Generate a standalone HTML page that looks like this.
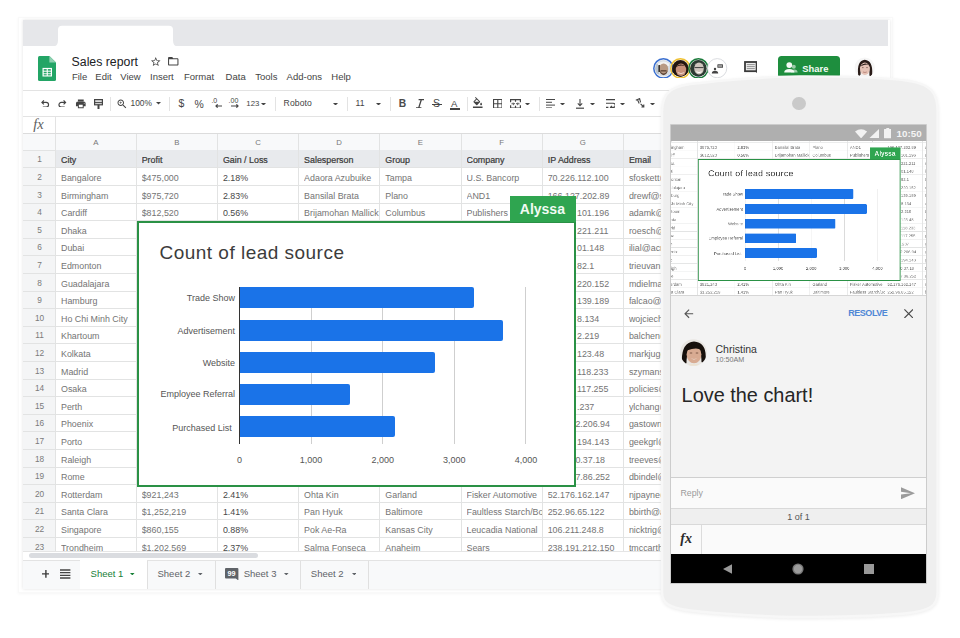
<!DOCTYPE html>
<html><head><meta charset="utf-8"><style>
*{box-sizing:border-box}
html,body{margin:0;padding:0}
body{width:960px;height:638px;overflow:hidden;background:#fff;position:relative;font-family:"Liberation Sans",sans-serif;color:#202124}
.abs{position:absolute}
.hl{position:absolute;left:0;width:1000px;height:1px;background:#e2e3e3}
.vl{position:absolute;top:133px;width:1px;height:440px;background:#e2e3e3}
.c,.hd{position:absolute;height:17.6px;line-height:17.6px;font-size:8.9px;white-space:nowrap;overflow:hidden;padding-top:2.2px;color:#747474}
.hd{font-weight:normal;color:#3a3a3a;font-size:8.9px;padding-top:1.4px;-webkit-text-stroke:0.22px #3a3a3a}
.dk{color:#484848}
.chart{position:absolute;left:136.9px;top:220.8px;width:439.1px;height:266.3px;background:#fff;border:2px solid #2a9145}
.ctitle{position:absolute;left:159.5px;top:242.2px;font-size:19px;letter-spacing:0.48px;color:#3c3c3c;white-space:nowrap;line-height:22px}
.bar{position:absolute;left:239.5px;height:21px;background:#1a73e8;border-radius:0 2px 2px 0}
.blab{position:absolute;left:135px;width:100px;text-align:right;font-size:9px;line-height:16px;color:#555;white-space:nowrap}
.alab{position:absolute;top:452px;width:60px;text-align:center;font-size:9px;line-height:16px;color:#555}
.tag{position:absolute;left:509.6px;top:196.3px;width:66.4px;height:25.4px;background:#2fa550;color:#f1fbf3;font-weight:bold;font-size:14px;line-height:25px;padding-left:10.2px;padding-top:1px}

.tb{position:absolute;top:98.2px;line-height:11px;color:#444;white-space:nowrap}
</style></head>
<body>
<div class="abs" style="left:17.5px;top:16.5px;width:875.5px;height:576px;border:1px solid rgba(0,0,0,0.025);box-shadow:0 1px 3px rgba(0,0,0,0.04)"></div>
<div class="abs" style="left:23px;top:19.5px;width:867px;height:569.5px;background:#fff;box-shadow:0 0 3px rgba(0,0,0,0.12)"></div>
<div class="abs" style="left:23px;top:19.5px;width:865.3px;height:26.4px;background:#e6e7ea"></div><svg class="abs" style="left:51.5px;top:24.5px;" width="127" height="22" viewBox="0 0 127 22"><path fill="#fff" d="M0 22 Q6 22 6 15.5 V4.8 Q6 0.8 10 0.8 H117 Q121 0.8 121 4.8 V15.5 Q121 22 127 22 Z"/></svg><svg class="abs" style="left:38px;top:55.8px;" width="18" height="25" viewBox="0 0 18 25"><path fill="#23a566" d="M1.5 0H11.4L18 6.4V23.5Q18 25 16.5 25H1.5Q0 25 0 23.5V1.5Q0 0 1.5 0Z"/><path fill="#8ed1b1" d="M11.4 0L18 6.4H11.4Z"/><rect x="4.5" y="11.9" width="9.5" height="8.6" fill="#fff"/><rect x="5.7" y="13.1" width="3" height="1.6" fill="#23a566"/><rect x="9.8" y="13.1" width="3" height="1.6" fill="#23a566"/><rect x="5.7" y="15.7" width="3" height="1.6" fill="#23a566"/><rect x="9.8" y="15.7" width="3" height="1.6" fill="#23a566"/><rect x="5.7" y="18.2" width="3" height="1.2" fill="#23a566"/><rect x="9.8" y="18.2" width="3" height="1.2" fill="#23a566"/></svg><div class="abs" style="left:71.6px;top:54.1px;font-size:12.3px;line-height:16px;color:#202124;white-space:nowrap">Sales report</div><svg class="abs" style="left:150.25px;top:55.55px;" width="11.5" height="11.5" viewBox="0 0 24 24"><path fill="#444" d="M22 9.24l-7.19-.62L12 2 9.19 8.63 2 9.24l5.46 4.73L5.82 21 12 17.27 18.18 21l-1.63-7.03L22 9.24zM12 15.4l-3.76 2.27 1-4.28-3.32-2.88 4.38-.38L12 6.1l1.71 4.04 4.38.38-3.32 2.88 1 4.28L12 15.4z"/></svg><svg class="abs" style="left:167.05px;top:55.25px;" width="12.5" height="12.5" viewBox="0 0 24 24"><path fill="#444" d="M20 6h-8l-2-2H4c-1.1 0-1.99.9-1.99 2L2 18c0 1.1.9 2 2 2h16c1.1 0 2-.9 2-2V8c0-1.1-.9-2-2-2zm0 12H4V8h16v10z"/></svg><div class="abs" style="left:71.9px;top:71.4px;font-size:9.5px;line-height:12px;color:#444;white-space:nowrap">File</div><div class="abs" style="left:95.3px;top:71.4px;font-size:9.5px;line-height:12px;color:#444;white-space:nowrap">Edit</div><div class="abs" style="left:120.3px;top:71.4px;font-size:9.5px;line-height:12px;color:#444;white-space:nowrap">View</div><div class="abs" style="left:150px;top:71.4px;font-size:9.5px;line-height:12px;color:#444;white-space:nowrap">Insert</div><div class="abs" style="left:184px;top:71.4px;font-size:9.5px;line-height:12px;color:#444;white-space:nowrap">Format</div><div class="abs" style="left:225.6px;top:71.4px;font-size:9.5px;line-height:12px;color:#444;white-space:nowrap">Data</div><div class="abs" style="left:255.3px;top:71.4px;font-size:9.5px;line-height:12px;color:#444;white-space:nowrap">Tools</div><div class="abs" style="left:286.6px;top:71.4px;font-size:9.5px;line-height:12px;color:#444;white-space:nowrap">Add-ons</div><div class="abs" style="left:331.3px;top:71.4px;font-size:9.5px;line-height:12px;color:#444;white-space:nowrap">Help</div><div class="abs" style="left:23px;top:90px;width:867px;height:1px;background:#e3e3e3"></div><div class="abs" style="left:23px;top:115.8px;width:867px;height:1px;background:#e3e3e3"></div><div class="abs" style="left:23px;top:133px;width:867px;height:1px;background:#e3e3e3"></div><svg class="abs" style="left:41.4px;top:99.6px;" width="8.5" height="7.6" viewBox="0 0 8.5 7.6"><path fill="none" stroke="#444" stroke-width="1.15" d="M0.9 2.4H5.2A2.35 2.35 0 0 1 5.2 7.1H1.8M2.9 0.4L0.9 2.4 2.9 4.4"/></svg><svg class="abs" style="left:58.3px;top:99.6px;" width="8.5" height="7.6" viewBox="0 0 8.5 7.6"><path fill="none" stroke="#444" stroke-width="1.15" d="M7.6 2.4H3.3A2.35 2.35 0 0 0 3.3 7.1H6.7M5.6 0.4L7.6 2.4 5.6 4.4"/></svg><svg class="abs" style="left:74.9px;top:97.5px;" width="11.6" height="11.6" viewBox="0 0 24 24"><path fill="#444" d="M19 8H5c-1.66 0-3 1.34-3 3v6h4v4h12v-4h4v-6c0-1.66-1.34-3-3-3zm-3 11H8v-5h8v5zm3-7c-.55 0-1-.45-1-1s.45-1 1-1 1 .45 1 1-.45 1-1 1zm-1-9H6v4h12V3z"/></svg><svg class="abs" style="left:93.6px;top:99px;" width="9" height="10" viewBox="0 0 9 10"><rect x="0.6" y="0.6" width="7.8" height="5.2" fill="#ddd" stroke="#444" stroke-width="1.2"/><path d="M0.6 3.6H8.4" stroke="#444" stroke-width="1"/><rect x="3.5" y="5.6" width="2" height="4.4" fill="#444"/></svg><div class="abs" style="left:110px;top:96.5px;width:1px;height:14px;background:#e3e3e3"></div><div class="abs" style="left:169.3px;top:96.5px;width:1px;height:14px;background:#e3e3e3"></div><div class="abs" style="left:275.3px;top:96.5px;width:1px;height:14px;background:#e3e3e3"></div><div class="abs" style="left:347.3px;top:96.5px;width:1px;height:14px;background:#e3e3e3"></div><div class="abs" style="left:389.8px;top:96.5px;width:1px;height:14px;background:#e3e3e3"></div><div class="abs" style="left:466.8px;top:96.5px;width:1px;height:14px;background:#e3e3e3"></div><div class="abs" style="left:539.2px;top:96.5px;width:1px;height:14px;background:#e3e3e3"></div><svg class="abs" style="left:116px;top:97.5px;" width="12" height="12" viewBox="0 0 24 24"><path fill="#444" d="M15.5 14h-.79l-.28-.27C15.41 12.590 16 11.11 16 9.5 16 5.91 13.09 3 9.5 3S3 5.91 3 9.5 5.91 16 9.5 16c1.61 0 3.09-.59 4.23-1.57l.27.28v.79l5 4.99L20.49 19l-4.99-5zm-6 0C7.01 14 5 11.99 5 9.5S7.01 5 9.5 5 14 7.01 14 9.5 11.99 14 9.5 14zm2.5-4h-2v2H9v-2H7V9h2V7h1v2h2v1z"/></svg><div class="abs tb" style="left:130.5px;font-size:8.4px;top:98.4px">100%</div><svg class="abs" style="left:155.7px;top:102.3px;" width="5" height="2.6" viewBox="0 0 5 2.6"><path fill="#444" d="M0 0H5L2.5 2.6Z"/></svg><div class="abs tb" style="left:178.5px;font-size:10.5px;top:97.6px">$</div><div class="abs tb" style="left:194.6px;font-size:10.4px;top:98.6px">%</div><div class="abs tb" style="left:211.4px;font-size:7px;top:95.4px">.0</div><svg class="abs" style="left:214.5px;top:104.2px;" width="7.5" height="4" viewBox="0 0 7.5 4"><path fill="none" stroke="#444" stroke-width="1.2" d="M7.5 2H1M2.6 0.4L1 2 2.6 3.6"/></svg><div class="abs tb" style="left:228.6px;font-size:7px;top:95.4px">.00</div><svg class="abs" style="left:231px;top:104.2px;" width="8" height="4" viewBox="0 0 8 4"><path fill="none" stroke="#444" stroke-width="1.2" d="M0 2H7M5.4 0.4L7 2 5.4 3.6"/></svg><div class="abs tb" style="left:246.3px;font-size:7.8px;top:98px">123</div><svg class="abs" style="left:261.2px;top:102.5px;" width="5" height="2.6" viewBox="0 0 5 2.6"><path fill="#444" d="M0 0H5L2.5 2.6Z"/></svg><div class="abs tb" style="left:283.6px;font-size:8.6px;letter-spacing:0.1px;top:98.3px">Roboto</div><svg class="abs" style="left:332.9px;top:102.5px;" width="5" height="2.6" viewBox="0 0 5 2.6"><path fill="#444" d="M0 0H5L2.5 2.6Z"/></svg><div class="abs tb" style="left:355.6px;font-size:8.6px;top:98.3px">11</div><svg class="abs" style="left:375.6px;top:102.5px;" width="5" height="2.6" viewBox="0 0 5 2.6"><path fill="#444" d="M0 0H5L2.5 2.6Z"/></svg><div class="abs tb" style="left:398.8px;font-size:10.3px;font-weight:bold;top:98.2px;color:#4a4a4a">B</div><svg class="abs" style="left:415.5px;top:98.6px;" width="8" height="9.6" viewBox="0 0 8 9.6"><path fill="none" stroke="#444" stroke-width="1.3" d="M2.6 0.7H8M0 8.9H5.4M5.3 0.7L2.7 8.9"/></svg><div class="abs tb" style="left:433px;font-size:10.6px;top:98px">S</div><div class="abs" style="left:431.5px;top:103.6px;width:10.5px;height:1px;background:#444"></div><div class="abs tb" style="left:451px;font-size:9.6px;top:97.6px">A</div><div class="abs" style="left:449.6px;top:108.3px;width:10.6px;height:1.4px;background:#444"></div><svg class="abs" style="left:472.25px;top:97.45px;" width="11.5" height="11.5" viewBox="0 0 24 24"><path fill="#444" d="M16.56 8.94L7.62 0 6.21 1.41l2.38 2.38-5.15 5.15c-.59.59-.59 1.54 0 2.12l5.5 5.5c.29.29.68.44 1.06.44s.77-.15 1.06-.44l5.5-5.5c.59-.58.59-1.53 0-2.12zM5.21 10L10 5.21 14.79 10H5.21zM19 11.5s-2 2.170-2 3.5c0 1.1.9 2 2 2s2-.9 2-2c0-1.33-2-3.5-2-3.5z M2 20h20v3H2z"/></svg><svg class="abs" style="left:492.6px;top:98.8px;" width="9.6" height="9.6" viewBox="0 0 9.6 9.6"><path fill="none" stroke="#444" stroke-width="1.1" d="M0.55 0.55H9.05V9.05H0.55ZM4.8 0.55V9.05M0.55 4.8H9.05"/></svg><svg class="abs" style="left:510px;top:98.6px;" width="11" height="9.6" viewBox="0 0 11 9.6"><path fill="none" stroke="#444" stroke-width="1.2" d="M0.6 3.3V0.6H10.4V3.3M0.6 6.3V9H10.4V6.3M5.5 0.6V2.8M5.5 6.8V9"/><path fill="none" stroke="#444" stroke-width="1" d="M1.5 4.8H4.3M3.2 3.6L4.4 4.8 3.2 6M9.5 4.8H6.7M7.8 3.6L6.6 4.8 7.8 6"/></svg><svg class="abs" style="left:525px;top:102.5px;" width="5" height="2.6" viewBox="0 0 5 2.6"><path fill="#444" d="M0 0H5L2.5 2.6Z"/></svg><svg class="abs" style="left:546px;top:98.8px;" width="9.4" height="9.4" viewBox="0 0 9.4 9.4"><path stroke="#444" stroke-width="1" d="M0 0.5H9.4M0 3.3H6M0 6.1H9.4M0 8.9H6"/></svg><svg class="abs" style="left:560px;top:102.5px;" width="5" height="2.6" viewBox="0 0 5 2.6"><path fill="#444" d="M0 0H5L2.5 2.6Z"/></svg><svg class="abs" style="left:576.4px;top:98.6px;" width="8" height="10" viewBox="0 0 8 10"><path fill="none" stroke="#444" stroke-width="1.1" d="M4 0V6.5M1.8 4.4L4 6.8 6.2 4.4"/><path stroke="#444" stroke-width="1.2" d="M0 9.2H8"/></svg><svg class="abs" style="left:590.1px;top:102.5px;" width="5" height="2.6" viewBox="0 0 5 2.6"><path fill="#444" d="M0 0H5L2.5 2.6Z"/></svg><svg class="abs" style="left:605.6px;top:99px;" width="9.4" height="9.4" viewBox="0 0 9.4 9.4"><path fill="none" stroke="#444" stroke-width="1.1" d="M0 0.6H9.4M0 4.2H7.2A2.1 2.1 0 0 1 7.2 8.4H4.6M5.8 6.8L4.4 8.4 5.8 9.9M0 8.4H2.4"/></svg><svg class="abs" style="left:619.8px;top:102.5px;" width="5" height="2.6" viewBox="0 0 5 2.6"><path fill="#444" d="M0 0H5L2.5 2.6Z"/></svg><svg class="abs" style="left:635.2px;top:98.4px;" width="10" height="10" viewBox="0 0 10 10"><path fill="none" stroke="#444" stroke-width="1.1" d="M0.8 2.2L4.6 0.6 5.6 4.4M2.4 1.6L4.2 5.6M5.6 5.8L8.8 9M8.8 6.6V9H6.4"/></svg><svg class="abs" style="left:649.8px;top:102.5px;" width="5" height="2.6" viewBox="0 0 5 2.6"><path fill="#444" d="M0 0H5L2.5 2.6Z"/></svg><div class="abs" style="left:33.2px;top:116.4px;font-family:'Liberation Serif',serif;font-style:italic;font-size:14.5px;line-height:16px;color:#606060">fx</div><div class="abs" style="left:55px;top:116px;width:1px;height:17px;background:#e3e3e3"></div><svg class="abs" style="left:652.8px;top:57.6px;" width="20.8" height="20.8" viewBox="0 0 20.8 20.8"><defs><clipPath id="a1"><circle cx="10.4" cy="10.4" r="8.3"/></clipPath></defs><g clip-path="url(#a1)"><rect width="20.8" height="20.8" fill="#d9dee3"/><rect x="0" y="6" width="6" height="10" fill="#b9c3cc"/><path d="M5 5.5Q10.4 1.5 16 5.5V8H5Z" fill="#f2f2f2"/><ellipse cx="10.6" cy="11" rx="4.6" ry="5.6" fill="#b89a84"/><path d="M6.6 12.6Q10.6 18.6 14.6 12.6Q14 16.6 10.6 17.2Q7.2 16.6 6.6 12.6Z" fill="#5e4638"/><rect x="7.6" y="12.2" width="6" height="1.3" fill="#5a4030"/><path d="M3 21Q10.4 14.5 18 21Z" fill="#eef0f2"/><rect x="5.4" y="7" width="1.6" height="7" fill="#3a3430"/></g><circle cx="10.4" cy="10.4" r="9.6" fill="none" stroke="#3a6fd0" stroke-width="1.5"/></svg><svg class="abs" style="left:670.4px;top:57.6px;" width="20.8" height="20.8" viewBox="0 0 20.8 20.8"><defs><clipPath id="a2"><circle cx="10.4" cy="10.4" r="8.3"/></clipPath></defs><g clip-path="url(#a2)"><rect width="20.8" height="20.8" fill="#3b2a22"/><path d="M2 20Q1 3 10.4 2.6Q19.8 3 19 20Z" fill="#22160f"/><ellipse cx="11" cy="11.8" rx="5.2" ry="6.2" fill="#c8917a"/><path d="M7.8 14.6Q11 16.6 14.2 14.6" stroke="#f0e0d8" stroke-width="0.9" fill="none"/><path d="M5.6 9Q10 4 16 8.6Q12 6.4 5.6 9Z" fill="#22160f"/></g><circle cx="10.4" cy="10.4" r="9.6" fill="none" stroke="#f0c233" stroke-width="1.5"/></svg><svg class="abs" style="left:688.2px;top:57.6px;" width="20.8" height="20.8" viewBox="0 0 20.8 20.8"><defs><clipPath id="a3"><circle cx="10.4" cy="10.4" r="8.3"/></clipPath></defs><g clip-path="url(#a3)"><rect width="20.8" height="20.8" fill="#2c3a32"/><ellipse cx="11" cy="10.6" rx="4.8" ry="6" fill="#cfc6be"/><path d="M6 7.2Q11 1.8 16 7.2Q14.6 4.6 11 4.4Q7.4 4.6 6 7.2Z" fill="#9d9894"/><path d="M6.6 9.6H15.4" stroke="#3a3a3a" stroke-width="1"/><path d="M8.4 13.8Q11 15.4 13.6 13.8" stroke="#fff" stroke-width="1" fill="none"/><path d="M2 21Q10.4 15 19 21Z" fill="#58708a"/></g><circle cx="10.4" cy="10.4" r="9.6" fill="none" stroke="#1b7a3b" stroke-width="1.5"/></svg><svg class="abs" style="left:707.3px;top:57.8px;" width="20.4" height="20.4" viewBox="0 0 20.4 20.4"><circle cx="10.2" cy="10.2" r="9.6" fill="#fff" stroke="#dadce0" stroke-width="1"/><circle cx="8" cy="11" r="1.2" fill="#444"/><path d="M4.8 15.6Q4.8 12.8 8 12.8Q11.2 12.8 11.2 15.6Z" fill="#444"/><rect x="10.4" y="6.2" width="5.6" height="3.6" rx="0.6" fill="#444"/><path d="M11.2 7.4H15.2M11.2 8.6H15.2" stroke="#fff" stroke-width="0.5"/></svg><svg class="abs" style="left:743.8px;top:61.3px;" width="13.6" height="12.6" viewBox="0 0 13.6 12.6"><rect x="1" y="1" width="11.6" height="9.2" fill="#ececec" stroke="#3a3a3a" stroke-width="1.8"/><path d="M2.8 3.6H10.8M2.8 5.6H10.8M2.8 7.6H10.8" stroke="#7a7a7a" stroke-width="0.8"/><path d="M11.2 10.6H13.6V12.6Z" fill="#3a3a3a"/></svg><div class="abs" style="left:778px;top:56.3px;width:62px;height:22px;background:#1e8e3e;border-radius:3.5px"></div><svg class="abs" style="left:783px;top:60.5px;" width="16" height="13" viewBox="0 0 16 13"><circle cx="10.8" cy="5.8" r="2" fill="rgba(255,255,255,0.55)"/><path d="M8 11.6Q8 8.4 11.3 8.4Q14.6 8.4 14.6 11.6Z" fill="rgba(255,255,255,0.55)"/><circle cx="6.3" cy="4.1" r="2.9" fill="#f4fbf5"/><path d="M1.2 11.6Q1.2 8 6.3 8Q11.4 8 11.4 11.6Z" fill="#f4fbf5"/></svg><div class="abs" style="left:802.3px;top:63.3px;font-size:9.4px;font-weight:bold;line-height:12px;color:#f4fbf6">Share</div><svg class="abs" style="left:853.8px;top:57.2px;" width="21.4" height="21.4" viewBox="0 0 21.4 21.4"><defs><clipPath id="pf"><circle cx="10.7" cy="10.7" r="10.2"/></clipPath></defs><g clip-path="url(#pf)"><rect width="21.4" height="21.4" fill="#f6f6f6"/><path d="M4.2 18Q2.6 3.6 10.8 2.8Q19 3.6 18.2 17Q17.4 20.4 15.4 18.4V10Q10.8 6.6 6.6 10V17.6Q5.6 19.6 4.2 18Z" fill="#2a1c18"/><ellipse cx="10.9" cy="11.8" rx="4.9" ry="6.2" fill="#e6c3b6"/><path d="M6.2 9.4Q10.4 4.4 15.6 8.2Q12.4 6.6 6.2 9.4Z" fill="#2a1c18"/><path d="M9 15Q11 16 12.8 15" stroke="#b07a70" stroke-width="0.8" fill="none"/><path d="M8 10.6H9.6M12.2 10.6H13.8" stroke="#6a4a40" stroke-width="0.7"/></g></svg>
<div class="abs" style="left:23px;top:133.3px;width:867px;height:418.1px;overflow:hidden">
  <div class="abs" style="left:-23px;top:-133.3px;width:960px;height:640px">
  <div class="abs" style="left:23px;top:133.3px;width:867px;height:17px;background:#f8f9fa"></div><div class="abs" style="left:23px;top:150.3px;width:32.5px;height:404.8px;background:#f4f5f6"></div><div class="abs" style="left:75.85px;top:136.3px;width:40px;text-align:center;font-size:7.8px;line-height:13px;color:#777">A</div><div class="abs" style="left:156.8px;top:136.3px;width:40px;text-align:center;font-size:7.8px;line-height:13px;color:#777">B</div><div class="abs" style="left:238px;top:136.3px;width:40px;text-align:center;font-size:7.8px;line-height:13px;color:#777">C</div><div class="abs" style="left:319.2px;top:136.3px;width:40px;text-align:center;font-size:7.8px;line-height:13px;color:#777">D</div><div class="abs" style="left:400.4px;top:136.3px;width:40px;text-align:center;font-size:7.8px;line-height:13px;color:#777">E</div><div class="abs" style="left:481.6px;top:136.3px;width:40px;text-align:center;font-size:7.8px;line-height:13px;color:#777">F</div><div class="abs" style="left:562.8px;top:136.3px;width:40px;text-align:center;font-size:7.8px;line-height:13px;color:#777">G</div><div class="abs" style="left:644px;top:136.3px;width:40px;text-align:center;font-size:7.8px;line-height:13px;color:#777">H</div><div class="abs" style="left:725.2px;top:136.3px;width:40px;text-align:center;font-size:7.8px;line-height:13px;color:#777">I</div><div class="abs" style="left:806.4px;top:136.3px;width:40px;text-align:center;font-size:7.8px;line-height:13px;color:#777">J</div><div class="abs" style="left:887.6px;top:136.3px;width:40px;text-align:center;font-size:7.8px;line-height:13px;color:#777">K</div><div class="abs" style="left:23.5px;top:150.3px;width:32px;text-align:center;font-size:8.3px;line-height:17.6px;padding-top:1.2px;color:#7a7a7a">1</div><div class="abs" style="left:23.5px;top:167.9px;width:32px;text-align:center;font-size:8.3px;line-height:17.6px;padding-top:1.2px;color:#7a7a7a">2</div><div class="abs" style="left:23.5px;top:185.5px;width:32px;text-align:center;font-size:8.3px;line-height:17.6px;padding-top:1.2px;color:#7a7a7a">3</div><div class="abs" style="left:23.5px;top:203.1px;width:32px;text-align:center;font-size:8.3px;line-height:17.6px;padding-top:1.2px;color:#7a7a7a">4</div><div class="abs" style="left:23.5px;top:220.7px;width:32px;text-align:center;font-size:8.3px;line-height:17.6px;padding-top:1.2px;color:#7a7a7a">5</div><div class="abs" style="left:23.5px;top:238.3px;width:32px;text-align:center;font-size:8.3px;line-height:17.6px;padding-top:1.2px;color:#7a7a7a">6</div><div class="abs" style="left:23.5px;top:255.9px;width:32px;text-align:center;font-size:8.3px;line-height:17.6px;padding-top:1.2px;color:#7a7a7a">7</div><div class="abs" style="left:23.5px;top:273.5px;width:32px;text-align:center;font-size:8.3px;line-height:17.6px;padding-top:1.2px;color:#7a7a7a">8</div><div class="abs" style="left:23.5px;top:291.1px;width:32px;text-align:center;font-size:8.3px;line-height:17.6px;padding-top:1.2px;color:#7a7a7a">9</div><div class="abs" style="left:23.5px;top:308.7px;width:32px;text-align:center;font-size:8.3px;line-height:17.6px;padding-top:1.2px;color:#7a7a7a">10</div><div class="abs" style="left:23.5px;top:326.3px;width:32px;text-align:center;font-size:8.3px;line-height:17.6px;padding-top:1.2px;color:#7a7a7a">11</div><div class="abs" style="left:23.5px;top:343.9px;width:32px;text-align:center;font-size:8.3px;line-height:17.6px;padding-top:1.2px;color:#7a7a7a">12</div><div class="abs" style="left:23.5px;top:361.5px;width:32px;text-align:center;font-size:8.3px;line-height:17.6px;padding-top:1.2px;color:#7a7a7a">13</div><div class="abs" style="left:23.5px;top:379.1px;width:32px;text-align:center;font-size:8.3px;line-height:17.6px;padding-top:1.2px;color:#7a7a7a">14</div><div class="abs" style="left:23.5px;top:396.7px;width:32px;text-align:center;font-size:8.3px;line-height:17.6px;padding-top:1.2px;color:#7a7a7a">15</div><div class="abs" style="left:23.5px;top:414.3px;width:32px;text-align:center;font-size:8.3px;line-height:17.6px;padding-top:1.2px;color:#7a7a7a">16</div><div class="abs" style="left:23.5px;top:431.9px;width:32px;text-align:center;font-size:8.3px;line-height:17.6px;padding-top:1.2px;color:#7a7a7a">17</div><div class="abs" style="left:23.5px;top:449.5px;width:32px;text-align:center;font-size:8.3px;line-height:17.6px;padding-top:1.2px;color:#7a7a7a">18</div><div class="abs" style="left:23.5px;top:467.1px;width:32px;text-align:center;font-size:8.3px;line-height:17.6px;padding-top:1.2px;color:#7a7a7a">19</div><div class="abs" style="left:23.5px;top:484.7px;width:32px;text-align:center;font-size:8.3px;line-height:17.6px;padding-top:1.2px;color:#7a7a7a">20</div><div class="abs" style="left:23.5px;top:502.3px;width:32px;text-align:center;font-size:8.3px;line-height:17.6px;padding-top:1.2px;color:#7a7a7a">21</div><div class="abs" style="left:23.5px;top:519.9px;width:32px;text-align:center;font-size:8.3px;line-height:17.6px;padding-top:1.2px;color:#7a7a7a">22</div><div class="abs" style="left:23.5px;top:537.5px;width:32px;text-align:center;font-size:8.3px;line-height:17.6px;padding-top:1.2px;color:#7a7a7a">23</div><div class="abs" style="left:23.5px;top:555.1px;width:32px;text-align:center;font-size:8.3px;line-height:17.6px;padding-top:1.2px;color:#7a7a7a">24</div><div class="abs" style="left:23px;top:149.8px;width:867px;height:1px;background:#e2e3e3"></div>
  <div style="position:absolute;left:55.5px;top:150.3px;width:1092.7px;height:17.6px;background:#e8eaed"></div>
<div class="hl" style="top:167.4px"></div>
<div class="hl" style="top:185px"></div>
<div class="hl" style="top:202.6px"></div>
<div class="hl" style="top:220.2px"></div>
<div class="hl" style="top:237.8px"></div>
<div class="hl" style="top:255.4px"></div>
<div class="hl" style="top:273px"></div>
<div class="hl" style="top:290.6px"></div>
<div class="hl" style="top:308.2px"></div>
<div class="hl" style="top:325.8px"></div>
<div class="hl" style="top:343.4px"></div>
<div class="hl" style="top:361px"></div>
<div class="hl" style="top:378.6px"></div>
<div class="hl" style="top:396.2px"></div>
<div class="hl" style="top:413.8px"></div>
<div class="hl" style="top:431.4px"></div>
<div class="hl" style="top:449px"></div>
<div class="hl" style="top:466.6px"></div>
<div class="hl" style="top:484.2px"></div>
<div class="hl" style="top:501.8px"></div>
<div class="hl" style="top:519.4px"></div>
<div class="hl" style="top:537px"></div>
<div class="hl" style="top:554.6px"></div>
<div class="hl" style="top:572.2px"></div>
<div class="vl" style="left:55px"></div>
<div class="vl" style="left:135.7px"></div>
<div class="vl" style="left:216.9px"></div>
<div class="vl" style="left:298.1px"></div>
<div class="vl" style="left:379.3px"></div>
<div class="vl" style="left:460.5px"></div>
<div class="vl" style="left:541.7px"></div>
<div class="vl" style="left:622.9px"></div>
<div class="vl" style="left:704.1px"></div>
<div class="vl" style="left:785.3px"></div>
<div class="vl" style="left:866.5px"></div>
<div class="vl" style="left:947.7px"></div>
<div class="hd" style="left:61px;top:150.3px;width:74.7px">City</div>
<div class="hd" style="left:141.7px;top:150.3px;width:75.2px">Profit</div>
<div class="hd" style="left:222.9px;top:150.3px;width:75.2px">Gain / Loss</div>
<div class="hd" style="left:304.1px;top:150.3px;width:75.2px">Salesperson</div>
<div class="hd" style="left:385.3px;top:150.3px;width:75.2px">Group</div>
<div class="hd" style="left:466.5px;top:150.3px;width:75.2px">Company</div>
<div class="hd" style="left:547.7px;top:150.3px;width:75.2px">IP Address</div>
<div class="hd" style="left:628.9px;top:150.3px;width:75.2px">Email</div>
<div class="c" style="left:61px;top:167.9px;width:74.7px">Bangalore</div>
<div class="c" style="left:141.7px;top:167.9px;width:75.2px">$475,000</div>
<div class="c dk" style="left:222.9px;top:167.9px;width:75.2px">2.18%</div>
<div class="c" style="left:304.1px;top:167.9px;width:75.2px">Adaora Azubuike</div>
<div class="c" style="left:385.3px;top:167.9px;width:75.2px">Tampa</div>
<div class="c" style="left:466.5px;top:167.9px;width:75.2px">U.S. Bancorp</div>
<div class="c" style="left:547.7px;top:167.9px;width:75.2px">70.226.112.100</div>
<div class="c" style="left:628.9px;top:167.9px;width:75.2px">sfoskett@att.net</div>
<div class="c" style="left:61px;top:185.5px;width:74.7px">Birmingham</div>
<div class="c" style="left:141.7px;top:185.5px;width:75.2px">$975,720</div>
<div class="c dk" style="left:222.9px;top:185.5px;width:75.2px">2.83%</div>
<div class="c" style="left:304.1px;top:185.5px;width:75.2px">Bansilal Brata</div>
<div class="c" style="left:385.3px;top:185.5px;width:75.2px">Plano</div>
<div class="c" style="left:466.5px;top:185.5px;width:75.2px">AND1</div>
<div class="c" style="left:547.7px;top:185.5px;width:75.2px">166.127.202.89</div>
<div class="c" style="left:628.9px;top:185.5px;width:75.2px">drewf@sbcglobal.net</div>
<div class="c" style="left:61px;top:203.1px;width:74.7px">Cardiff</div>
<div class="c" style="left:141.7px;top:203.1px;width:75.2px">$812,520</div>
<div class="c dk" style="left:222.9px;top:203.1px;width:75.2px">0.56%</div>
<div class="c" style="left:304.1px;top:203.1px;width:75.2px">Brijamohan Mallick</div>
<div class="c" style="left:385.3px;top:203.1px;width:75.2px">Columbus</div>
<div class="c" style="left:466.5px;top:203.1px;width:75.2px">Publishers</div>
<div class="c" style="left:577px;top:203.1px;width:45.9px">101.196</div>
<div class="c" style="left:628.9px;top:203.1px;width:75.2px">adamk@yahoo.com</div>
<div class="c" style="left:61px;top:220.7px;width:74.7px">Dhaka</div>
<div class="c" style="left:141.7px;top:220.7px;width:75.2px">$562,800</div>
<div class="c dk" style="left:222.9px;top:220.7px;width:75.2px">1.37%</div>
<div class="c" style="left:304.1px;top:220.7px;width:75.2px">Chukwudi Okafor</div>
<div class="c" style="left:385.3px;top:220.7px;width:75.2px">Atlanta</div>
<div class="c" style="left:466.5px;top:220.7px;width:75.2px">Clearwire</div>
<div class="c" style="left:577px;top:220.7px;width:45.9px">221.211</div>
<div class="c" style="left:628.9px;top:220.7px;width:75.2px">roesch@msn.com</div>
<div class="c" style="left:61px;top:238.3px;width:74.7px">Dubai</div>
<div class="c" style="left:141.7px;top:238.3px;width:75.2px">$613,300</div>
<div class="c dk" style="left:222.9px;top:238.3px;width:75.2px">2.52%</div>
<div class="c" style="left:304.1px;top:238.3px;width:75.2px">Chen Wong</div>
<div class="c" style="left:385.3px;top:238.3px;width:75.2px">Boston</div>
<div class="c" style="left:466.5px;top:238.3px;width:75.2px">Quaker</div>
<div class="c" style="left:577px;top:238.3px;width:45.9px">01.148</div>
<div class="c" style="left:628.9px;top:238.3px;width:75.2px">ilial@acm.org</div>
<div class="c" style="left:61px;top:255.9px;width:74.7px">Edmonton</div>
<div class="c" style="left:141.7px;top:255.9px;width:75.2px">$745,120</div>
<div class="c dk" style="left:222.9px;top:255.9px;width:75.2px">1.91%</div>
<div class="c" style="left:304.1px;top:255.9px;width:75.2px">Diego Ramirez</div>
<div class="c" style="left:385.3px;top:255.9px;width:75.2px">Denver</div>
<div class="c" style="left:466.5px;top:255.9px;width:75.2px">Sears</div>
<div class="c" style="left:577px;top:255.9px;width:45.9px">82.1</div>
<div class="c" style="left:628.9px;top:255.9px;width:75.2px">trieuvan@me.com</div>
<div class="c" style="left:61px;top:273.5px;width:74.7px">Guadalajara</div>
<div class="c" style="left:141.7px;top:273.5px;width:75.2px">$1,042,650</div>
<div class="c dk" style="left:222.9px;top:273.5px;width:75.2px">0.77%</div>
<div class="c" style="left:304.1px;top:273.5px;width:75.2px">Fatima Ali</div>
<div class="c" style="left:385.3px;top:273.5px;width:75.2px">Seattle</div>
<div class="c" style="left:466.5px;top:273.5px;width:75.2px">AIG</div>
<div class="c" style="left:577px;top:273.5px;width:45.9px">220.152</div>
<div class="c" style="left:628.9px;top:273.5px;width:75.2px">mdielmann@mac.com</div>
<div class="c" style="left:61px;top:291.1px;width:74.7px">Hamburg</div>
<div class="c" style="left:141.7px;top:291.1px;width:75.2px">$852,190</div>
<div class="c dk" style="left:222.9px;top:291.1px;width:75.2px">2.05%</div>
<div class="c" style="left:304.1px;top:291.1px;width:75.2px">Hans Muller</div>
<div class="c" style="left:385.3px;top:291.1px;width:75.2px">Austin</div>
<div class="c" style="left:466.5px;top:291.1px;width:75.2px">Pfizer</div>
<div class="c" style="left:577px;top:291.1px;width:45.9px">139.189</div>
<div class="c" style="left:628.9px;top:291.1px;width:75.2px">falcao@icloud.com</div>
<div class="c" style="left:61px;top:308.7px;width:74.7px">Ho Chi Minh City</div>
<div class="c" style="left:141.7px;top:308.7px;width:75.2px">$921,300</div>
<div class="c dk" style="left:222.9px;top:308.7px;width:75.2px">1.66%</div>
<div class="c" style="left:304.1px;top:308.7px;width:75.2px">Huong Tran</div>
<div class="c" style="left:385.3px;top:308.7px;width:75.2px">Dallas</div>
<div class="c" style="left:466.5px;top:308.7px;width:75.2px">Dell</div>
<div class="c" style="left:577px;top:308.7px;width:45.9px">8.134</div>
<div class="c" style="left:628.9px;top:308.7px;width:75.2px">wojciech@live.com</div>
<div class="c" style="left:61px;top:326.3px;width:74.7px">Khartoum</div>
<div class="c" style="left:141.7px;top:326.3px;width:75.2px">$503,870</div>
<div class="c dk" style="left:222.9px;top:326.3px;width:75.2px">2.94%</div>
<div class="c" style="left:304.1px;top:326.3px;width:75.2px">Ishaan Gupta</div>
<div class="c" style="left:385.3px;top:326.3px;width:75.2px">Miami</div>
<div class="c" style="left:466.5px;top:326.3px;width:75.2px">Apple</div>
<div class="c" style="left:577px;top:326.3px;width:45.9px">2.219</div>
<div class="c" style="left:628.9px;top:326.3px;width:75.2px">balchen@gmail.com</div>
<div class="c" style="left:61px;top:343.9px;width:74.7px">Kolkata</div>
<div class="c" style="left:141.7px;top:343.9px;width:75.2px">$712,400</div>
<div class="c dk" style="left:222.9px;top:343.9px;width:75.2px">0.93%</div>
<div class="c" style="left:304.1px;top:343.9px;width:75.2px">Jamal Kareem</div>
<div class="c" style="left:385.3px;top:343.9px;width:75.2px">Phoenix</div>
<div class="c" style="left:466.5px;top:343.9px;width:75.2px">Intel</div>
<div class="c" style="left:577px;top:343.9px;width:45.9px">123.48</div>
<div class="c" style="left:628.9px;top:343.9px;width:75.2px">markjugg@gmail.com</div>
<div class="c" style="left:61px;top:361.5px;width:74.7px">Madrid</div>
<div class="c" style="left:141.7px;top:361.5px;width:75.2px">$889,990</div>
<div class="c dk" style="left:222.9px;top:361.5px;width:75.2px">1.24%</div>
<div class="c" style="left:304.1px;top:361.5px;width:75.2px">Laura Ortiz</div>
<div class="c" style="left:385.3px;top:361.5px;width:75.2px">Houston</div>
<div class="c" style="left:466.5px;top:361.5px;width:75.2px">Nike</div>
<div class="c" style="left:577px;top:361.5px;width:45.9px">118.233</div>
<div class="c" style="left:628.9px;top:361.5px;width:75.2px">szymansk@att.net</div>
<div class="c" style="left:61px;top:379.1px;width:74.7px">Osaka</div>
<div class="c" style="left:141.7px;top:379.1px;width:75.2px">$1,134,500</div>
<div class="c dk" style="left:222.9px;top:379.1px;width:75.2px">2.67%</div>
<div class="c" style="left:304.1px;top:379.1px;width:75.2px">Maki Tanaka</div>
<div class="c" style="left:385.3px;top:379.1px;width:75.2px">Chicago</div>
<div class="c" style="left:466.5px;top:379.1px;width:75.2px">Toyota</div>
<div class="c" style="left:577px;top:379.1px;width:45.9px">117.255</div>
<div class="c" style="left:628.9px;top:379.1px;width:75.2px">policies@me.com</div>
<div class="c" style="left:61px;top:396.7px;width:74.7px">Perth</div>
<div class="c" style="left:141.7px;top:396.7px;width:75.2px">$654,230</div>
<div class="c dk" style="left:222.9px;top:396.7px;width:75.2px">1.08%</div>
<div class="c" style="left:304.1px;top:396.7px;width:75.2px">Nina Kowalski</div>
<div class="c" style="left:385.3px;top:396.7px;width:75.2px">Detroit</div>
<div class="c" style="left:466.5px;top:396.7px;width:75.2px">Ford</div>
<div class="c" style="left:577px;top:396.7px;width:45.9px">.237</div>
<div class="c" style="left:628.9px;top:396.7px;width:75.2px">ylchang@mac.com</div>
<div class="c" style="left:61px;top:414.3px;width:74.7px">Phoenix</div>
<div class="c" style="left:141.7px;top:414.3px;width:75.2px">$798,400</div>
<div class="c dk" style="left:222.9px;top:414.3px;width:75.2px">2.29%</div>
<div class="c" style="left:304.1px;top:414.3px;width:75.2px">Omar Haddad</div>
<div class="c" style="left:385.3px;top:414.3px;width:75.2px">Portland</div>
<div class="c" style="left:466.5px;top:414.3px;width:75.2px">Target</div>
<div class="c" style="left:575.4px;top:414.3px;width:47.5px">2.206.94</div>
<div class="c" style="left:628.9px;top:414.3px;width:75.2px">gastown@msn.com</div>
<div class="c" style="left:61px;top:431.9px;width:74.7px">Porto</div>
<div class="c" style="left:141.7px;top:431.9px;width:75.2px">$577,150</div>
<div class="c dk" style="left:222.9px;top:431.9px;width:75.2px">0.64%</div>
<div class="c" style="left:304.1px;top:431.9px;width:75.2px">Paula Silva</div>
<div class="c" style="left:385.3px;top:431.9px;width:75.2px">Orlando</div>
<div class="c" style="left:466.5px;top:431.9px;width:75.2px">Visa</div>
<div class="c" style="left:577px;top:431.9px;width:45.9px">194.143</div>
<div class="c" style="left:628.9px;top:431.9px;width:75.2px">geekgrl@aol.com</div>
<div class="c" style="left:61px;top:449.5px;width:74.7px">Raleigh</div>
<div class="c" style="left:141.7px;top:449.5px;width:75.2px">$934,870</div>
<div class="c dk" style="left:222.9px;top:449.5px;width:75.2px">1.73%</div>
<div class="c" style="left:304.1px;top:449.5px;width:75.2px">Quentin Blake</div>
<div class="c" style="left:385.3px;top:449.5px;width:75.2px">Tampa</div>
<div class="c" style="left:466.5px;top:449.5px;width:75.2px">Gap</div>
<div class="c" style="left:575.4px;top:449.5px;width:47.5px">0.37.18</div>
<div class="c" style="left:628.9px;top:449.5px;width:75.2px">treeves@me.com</div>
<div class="c" style="left:61px;top:467.1px;width:74.7px">Rome</div>
<div class="c" style="left:141.7px;top:467.1px;width:75.2px">$1,018,260</div>
<div class="c dk" style="left:222.9px;top:467.1px;width:75.2px">2.11%</div>
<div class="c" style="left:304.1px;top:467.1px;width:75.2px">Rosa Bianchi</div>
<div class="c" style="left:385.3px;top:467.1px;width:75.2px">Reno</div>
<div class="c" style="left:466.5px;top:467.1px;width:75.2px">Kraft</div>
<div class="c" style="left:575.4px;top:467.1px;width:47.5px">7.86.252</div>
<div class="c" style="left:628.9px;top:467.1px;width:75.2px">dbindel@live.com</div>
<div class="c" style="left:61px;top:484.7px;width:74.7px">Rotterdam</div>
<div class="c" style="left:141.7px;top:484.7px;width:75.2px">$921,243</div>
<div class="c dk" style="left:222.9px;top:484.7px;width:75.2px">2.41%</div>
<div class="c" style="left:304.1px;top:484.7px;width:75.2px">Ohta Kin</div>
<div class="c" style="left:385.3px;top:484.7px;width:75.2px">Garland</div>
<div class="c" style="left:466.5px;top:484.7px;width:75.2px">Fisker Automotive</div>
<div class="c" style="left:547.7px;top:484.7px;width:75.2px">52.176.162.147</div>
<div class="c" style="left:628.9px;top:484.7px;width:75.2px">njpayne@gmail.com</div>
<div class="c" style="left:61px;top:502.3px;width:74.7px">Santa Clara</div>
<div class="c" style="left:141.7px;top:502.3px;width:75.2px">$1,252,219</div>
<div class="c dk" style="left:222.9px;top:502.3px;width:75.2px">1.41%</div>
<div class="c" style="left:304.1px;top:502.3px;width:75.2px">Pan Hyuk</div>
<div class="c" style="left:385.3px;top:502.3px;width:75.2px">Baltimore</div>
<div class="c" style="left:466.5px;top:502.3px;width:75.2px">Faultless Starch/Bon Ami</div>
<div class="c" style="left:547.7px;top:502.3px;width:75.2px">252.96.65.122</div>
<div class="c" style="left:628.9px;top:502.3px;width:75.2px">bbirth@att.net</div>
<div class="c" style="left:61px;top:519.9px;width:74.7px">Singapore</div>
<div class="c" style="left:141.7px;top:519.9px;width:75.2px">$860,155</div>
<div class="c dk" style="left:222.9px;top:519.9px;width:75.2px">0.88%</div>
<div class="c" style="left:304.1px;top:519.9px;width:75.2px">Pok Ae-Ra</div>
<div class="c" style="left:385.3px;top:519.9px;width:75.2px">Kansas City</div>
<div class="c" style="left:466.5px;top:519.9px;width:75.2px">Leucadia National</div>
<div class="c" style="left:547.7px;top:519.9px;width:75.2px">106.211.248.8</div>
<div class="c" style="left:628.9px;top:519.9px;width:75.2px">nicktrig@me.com</div>
<div class="c" style="left:61px;top:537.5px;width:74.7px">Trondheim</div>
<div class="c" style="left:141.7px;top:537.5px;width:75.2px">$1,202,569</div>
<div class="c dk" style="left:222.9px;top:537.5px;width:75.2px">2.37%</div>
<div class="c" style="left:304.1px;top:537.5px;width:75.2px">Salma Fonseca</div>
<div class="c" style="left:385.3px;top:537.5px;width:75.2px">Anaheim</div>
<div class="c" style="left:466.5px;top:537.5px;width:75.2px">Sears</div>
<div class="c" style="left:547.7px;top:537.5px;width:75.2px">238.191.212.150</div>
<div class="c" style="left:628.9px;top:537.5px;width:75.2px">tmccarthy@mac.com</div>
<div class="chart"></div>
<div class="ctitle">Count of lead source</div>
<div style="position:absolute;left:310.6px;top:287px;width:1px;height:157px;background:#cfcfcf"></div>
<div style="position:absolute;left:382.2px;top:287px;width:1px;height:157px;background:#cfcfcf"></div>
<div style="position:absolute;left:453.8px;top:287px;width:1px;height:157px;background:#cfcfcf"></div>
<div style="position:absolute;left:525.4px;top:287px;width:1px;height:157px;background:#cfcfcf"></div>
<div class="bar" style="top:287px;width:234.1px"></div>
<div class="blab" style="top:289.5px;left:135px">Trade Show</div>
<div class="bar" style="top:320px;width:263.9px"></div>
<div class="blab" style="top:322.5px;left:135px">Advertisement</div>
<div class="bar" style="top:352px;width:195.2px"></div>
<div class="blab" style="top:354.5px;left:135px">Website</div>
<div class="bar" style="top:384px;width:110.4px"></div>
<div class="blab" style="top:385.5px;left:135px">Employee Referral</div>
<div class="bar" style="top:416px;width:155.3px"></div>
<div class="blab" style="top:419.5px;left:131.8px">Purchased List</div>
<div style="position:absolute;left:239px;top:287px;width:1px;height:157px;background:#333"></div>
<div class="alab" style="left:209.5px">0</div>
<div class="alab" style="left:281.1px">1,000</div>
<div class="alab" style="left:352.7px">2,000</div>
<div class="alab" style="left:424.3px">3,000</div>
<div class="alab" style="left:495.9px">4,000</div>
<div class="tag">Alyssa</div>
  </div>
</div>
<div class="abs" style="left:23px;top:133px;width:867px;height:1px;background:#dcdcdc"></div>
<div class="abs" style="left:23px;top:551.4px;width:867px;height:9px;background:#fff"></div><div class="abs" style="left:23px;top:551.4px;width:867px;height:1px;background:#e5e5e5"></div><div class="abs" style="left:29px;top:552.8px;width:228.5px;height:4.8px;background:#dadce0;border-radius:3px"></div><div class="abs" style="left:23px;top:560.3px;width:867px;height:28.7px;background:#f8f9fa;border-top:1px solid #e3e3e3"></div><div class="abs" style="left:79.6px;top:560.3px;width:67.4px;height:28.7px;background:#fff"></div><svg class="abs" style="left:41.6px;top:569.8px;" width="7.8" height="7.8" viewBox="0 0 7.8 7.8"><path stroke="#3c3c3c" stroke-width="1.4" d="M3.9 0V7.8M0 3.9H7.8"/></svg><svg class="abs" style="left:60.4px;top:569.2px;" width="10.4" height="10" viewBox="0 0 10.4 10"><path stroke="#444" stroke-width="1.3" d="M0 1H10.4M0 3.7H10.4M0 6.3H10.4M0 9H10.4"/></svg><div class="abs" style="left:90.6px;top:568.2px;font-size:9.5px;line-height:12px;color:#188038">Sheet 1</div><svg class="abs" style="left:130.2px;top:573.1px;" width="4.6" height="2.4" viewBox="0 0 4.6 2.4"><path fill="#188038" d="M0 0H4.6L2.3 2.4Z"/></svg><div class="abs" style="left:147px;top:561px;width:1px;height:28px;background:#e0e0e0"></div><div class="abs" style="left:214.6px;top:561px;width:1px;height:28px;background:#e0e0e0"></div><div class="abs" style="left:300px;top:561px;width:1px;height:28px;background:#e0e0e0"></div><div class="abs" style="left:367.9px;top:561px;width:1px;height:28px;background:#e0e0e0"></div><div class="abs" style="left:157.5px;top:568.2px;font-size:9.5px;line-height:12px;color:#5f6368">Sheet 2</div><svg class="abs" style="left:198.1px;top:573.1px;" width="4.6" height="2.4" viewBox="0 0 4.6 2.4"><path fill="#5f6368" d="M0 0H4.6L2.3 2.4Z"/></svg><svg class="abs" style="left:225.4px;top:567.8px;" width="13.4" height="12.5" viewBox="0 0 13.4 12.5"><path fill="#5f6368" d="M1 0H12.4Q13.4 0 13.4 1V12.5L10.8 10.5H1Q0 10.5 0 9.5V1Q0 0 1 0Z"/><text x="6.5" y="8.3" font-size="7.2" font-weight="bold" fill="#fff" text-anchor="middle" font-family="Liberation Sans">99</text></svg><div class="abs" style="left:243.7px;top:568.2px;font-size:9.5px;line-height:12px;color:#5f6368">Sheet 3</div><svg class="abs" style="left:284.4px;top:573.1px;" width="4.6" height="2.4" viewBox="0 0 4.6 2.4"><path fill="#5f6368" d="M0 0H4.6L2.3 2.4Z"/></svg><div class="abs" style="left:310.8px;top:568.2px;font-size:9.5px;line-height:12px;color:#5f6368">Sheet 2</div><svg class="abs" style="left:351.8px;top:573.1px;" width="4.6" height="2.4" viewBox="0 0 4.6 2.4"><path fill="#5f6368" d="M0 0H4.6L2.3 2.4Z"/></svg>
<svg class="abs" style="left:0;top:0;filter:drop-shadow(0 1.5px 1.5px rgba(0,0,0,0.07))" width="960" height="638" viewBox="0 0 960 638"><path fill="#efefef" stroke="#f7f7f7" stroke-width="2.4" d="M662 112C662 90 674 85 700 83C730 79.5 770 76.6 800 76.4C840 76.3 885 77.6 908 80.8C932 84.5 937.6 93 937.6 112L937.6 592C937.6 606 930 611 905 613.5C870 616.5 830 617 800 617C770 617 720 614 690 610.5C668 607.5 662 603 662 592Z"/></svg>
<div class="abs" style="left:792.2px;top:96.6px;width:13.6px;height:13.4px;border-radius:50%;background:#c9c9c9"></div>
<div class="abs" style="left:670.6px;top:124.9px;width:255.6px;height:458.3px;background:#fff;overflow:hidden;box-shadow:0 0 0 0.8px #c4c4c4">
<div class="abs" style="left:0;top:0;width:256px;height:15.9px;background:#afafaf"></div>
<svg class="abs" style="left:184.4px;top:4px;" width="12.2" height="9.4" viewBox="0 0 12.2 9.4"><path fill="#f2f2f2" d="M0 2.6Q6.1 -2.2 12.2 2.6L6.1 9.4Z"/></svg>
<svg class="abs" style="left:198.4px;top:4.1px;" width="10" height="9.5" viewBox="0 0 10 9.5"><path fill="#f2f2f2" d="M10 0V9.5H0Z"/></svg>
<svg class="abs" style="left:213.4px;top:3.5px;" width="7.5" height="10.2" viewBox="0 0 7.5 10.2"><path fill="#f2f2f2" d="M2.3 0H5.2V1H7Q7.5 1 7.5 1.5V9.7Q7.5 10.2 7 10.2H0.5Q0 10.2 0 9.7V1.5Q0 1 0.5 1H2.3Z"/></svg>
<div class="abs" style="left:226px;top:2.7px;font-size:9.8px;font-weight:bold;line-height:12px;color:#f4f4f4">10:50</div>
<div class="abs" style="left:0;top:15.9px;width:256px;height:154.2px;overflow:hidden">
<div class="abs" style="left:0;top:0;width:1200px;height:700px;will-change:transform;transform-origin:0 0;transform:translate(-36.61px,-83.34px) scale(0.462,0.458)">
<div style="position:absolute;left:55.5px;top:150.3px;width:1092.7px;height:17.6px;background:#e8eaed"></div>
<div class="hl" style="top:167.4px"></div>
<div class="hl" style="top:185px"></div>
<div class="hl" style="top:202.6px"></div>
<div class="hl" style="top:220.2px"></div>
<div class="hl" style="top:237.8px"></div>
<div class="hl" style="top:255.4px"></div>
<div class="hl" style="top:273px"></div>
<div class="hl" style="top:290.6px"></div>
<div class="hl" style="top:308.2px"></div>
<div class="hl" style="top:325.8px"></div>
<div class="hl" style="top:343.4px"></div>
<div class="hl" style="top:361px"></div>
<div class="hl" style="top:378.6px"></div>
<div class="hl" style="top:396.2px"></div>
<div class="hl" style="top:413.8px"></div>
<div class="hl" style="top:431.4px"></div>
<div class="hl" style="top:449px"></div>
<div class="hl" style="top:466.6px"></div>
<div class="hl" style="top:484.2px"></div>
<div class="hl" style="top:501.8px"></div>
<div class="hl" style="top:519.4px"></div>
<div class="hl" style="top:537px"></div>
<div class="hl" style="top:554.6px"></div>
<div class="hl" style="top:572.2px"></div>
<div class="vl" style="left:55px"></div>
<div class="vl" style="left:135.7px"></div>
<div class="vl" style="left:216.9px"></div>
<div class="vl" style="left:298.1px"></div>
<div class="vl" style="left:379.3px"></div>
<div class="vl" style="left:460.5px"></div>
<div class="vl" style="left:541.7px"></div>
<div class="vl" style="left:622.9px"></div>
<div class="vl" style="left:704.1px"></div>
<div class="vl" style="left:785.3px"></div>
<div class="vl" style="left:866.5px"></div>
<div class="vl" style="left:947.7px"></div>
<div class="hd" style="left:61px;top:150.3px;width:74.7px">City</div>
<div class="hd" style="left:141.7px;top:150.3px;width:75.2px">Profit</div>
<div class="hd" style="left:222.9px;top:150.3px;width:75.2px">Gain / Loss</div>
<div class="hd" style="left:304.1px;top:150.3px;width:75.2px">Salesperson</div>
<div class="hd" style="left:385.3px;top:150.3px;width:75.2px">Group</div>
<div class="hd" style="left:466.5px;top:150.3px;width:75.2px">Company</div>
<div class="hd" style="left:547.7px;top:150.3px;width:75.2px">IP Address</div>
<div class="hd" style="left:628.9px;top:150.3px;width:75.2px">Email</div>
<div class="c" style="left:61px;top:167.9px;width:74.7px">Bangalore</div>
<div class="c" style="left:141.7px;top:167.9px;width:75.2px">$475,000</div>
<div class="c dk" style="left:222.9px;top:167.9px;width:75.2px">2.18%</div>
<div class="c" style="left:304.1px;top:167.9px;width:75.2px">Adaora Azubuike</div>
<div class="c" style="left:385.3px;top:167.9px;width:75.2px">Tampa</div>
<div class="c" style="left:466.5px;top:167.9px;width:75.2px">U.S. Bancorp</div>
<div class="c" style="left:547.7px;top:167.9px;width:75.2px">70.226.112.100</div>
<div class="c" style="left:628.9px;top:167.9px;width:75.2px">sfoskett@att.net</div>
<div class="c" style="left:61px;top:185.5px;width:74.7px">Birmingham</div>
<div class="c" style="left:141.7px;top:185.5px;width:75.2px">$975,720</div>
<div class="c dk" style="left:222.9px;top:185.5px;width:75.2px">2.83%</div>
<div class="c" style="left:304.1px;top:185.5px;width:75.2px">Bansilal Brata</div>
<div class="c" style="left:385.3px;top:185.5px;width:75.2px">Plano</div>
<div class="c" style="left:466.5px;top:185.5px;width:75.2px">AND1</div>
<div class="c" style="left:547.7px;top:185.5px;width:75.2px">166.127.202.89</div>
<div class="c" style="left:628.9px;top:185.5px;width:75.2px">drewf@sbcglobal.net</div>
<div class="c" style="left:61px;top:203.1px;width:74.7px">Cardiff</div>
<div class="c" style="left:141.7px;top:203.1px;width:75.2px">$812,520</div>
<div class="c dk" style="left:222.9px;top:203.1px;width:75.2px">0.56%</div>
<div class="c" style="left:304.1px;top:203.1px;width:75.2px">Brijamohan Mallick</div>
<div class="c" style="left:385.3px;top:203.1px;width:75.2px">Columbus</div>
<div class="c" style="left:466.5px;top:203.1px;width:75.2px">Publishers</div>
<div class="c" style="left:577px;top:203.1px;width:45.9px">101.196</div>
<div class="c" style="left:628.9px;top:203.1px;width:75.2px">adamk@yahoo.com</div>
<div class="c" style="left:61px;top:220.7px;width:74.7px">Dhaka</div>
<div class="c" style="left:141.7px;top:220.7px;width:75.2px">$562,800</div>
<div class="c dk" style="left:222.9px;top:220.7px;width:75.2px">1.37%</div>
<div class="c" style="left:304.1px;top:220.7px;width:75.2px">Chukwudi Okafor</div>
<div class="c" style="left:385.3px;top:220.7px;width:75.2px">Atlanta</div>
<div class="c" style="left:466.5px;top:220.7px;width:75.2px">Clearwire</div>
<div class="c" style="left:577px;top:220.7px;width:45.9px">221.211</div>
<div class="c" style="left:628.9px;top:220.7px;width:75.2px">roesch@msn.com</div>
<div class="c" style="left:61px;top:238.3px;width:74.7px">Dubai</div>
<div class="c" style="left:141.7px;top:238.3px;width:75.2px">$613,300</div>
<div class="c dk" style="left:222.9px;top:238.3px;width:75.2px">2.52%</div>
<div class="c" style="left:304.1px;top:238.3px;width:75.2px">Chen Wong</div>
<div class="c" style="left:385.3px;top:238.3px;width:75.2px">Boston</div>
<div class="c" style="left:466.5px;top:238.3px;width:75.2px">Quaker</div>
<div class="c" style="left:577px;top:238.3px;width:45.9px">01.148</div>
<div class="c" style="left:628.9px;top:238.3px;width:75.2px">ilial@acm.org</div>
<div class="c" style="left:61px;top:255.9px;width:74.7px">Edmonton</div>
<div class="c" style="left:141.7px;top:255.9px;width:75.2px">$745,120</div>
<div class="c dk" style="left:222.9px;top:255.9px;width:75.2px">1.91%</div>
<div class="c" style="left:304.1px;top:255.9px;width:75.2px">Diego Ramirez</div>
<div class="c" style="left:385.3px;top:255.9px;width:75.2px">Denver</div>
<div class="c" style="left:466.5px;top:255.9px;width:75.2px">Sears</div>
<div class="c" style="left:577px;top:255.9px;width:45.9px">82.1</div>
<div class="c" style="left:628.9px;top:255.9px;width:75.2px">trieuvan@me.com</div>
<div class="c" style="left:61px;top:273.5px;width:74.7px">Guadalajara</div>
<div class="c" style="left:141.7px;top:273.5px;width:75.2px">$1,042,650</div>
<div class="c dk" style="left:222.9px;top:273.5px;width:75.2px">0.77%</div>
<div class="c" style="left:304.1px;top:273.5px;width:75.2px">Fatima Ali</div>
<div class="c" style="left:385.3px;top:273.5px;width:75.2px">Seattle</div>
<div class="c" style="left:466.5px;top:273.5px;width:75.2px">AIG</div>
<div class="c" style="left:577px;top:273.5px;width:45.9px">220.152</div>
<div class="c" style="left:628.9px;top:273.5px;width:75.2px">mdielmann@mac.com</div>
<div class="c" style="left:61px;top:291.1px;width:74.7px">Hamburg</div>
<div class="c" style="left:141.7px;top:291.1px;width:75.2px">$852,190</div>
<div class="c dk" style="left:222.9px;top:291.1px;width:75.2px">2.05%</div>
<div class="c" style="left:304.1px;top:291.1px;width:75.2px">Hans Muller</div>
<div class="c" style="left:385.3px;top:291.1px;width:75.2px">Austin</div>
<div class="c" style="left:466.5px;top:291.1px;width:75.2px">Pfizer</div>
<div class="c" style="left:577px;top:291.1px;width:45.9px">139.189</div>
<div class="c" style="left:628.9px;top:291.1px;width:75.2px">falcao@icloud.com</div>
<div class="c" style="left:61px;top:308.7px;width:74.7px">Ho Chi Minh City</div>
<div class="c" style="left:141.7px;top:308.7px;width:75.2px">$921,300</div>
<div class="c dk" style="left:222.9px;top:308.7px;width:75.2px">1.66%</div>
<div class="c" style="left:304.1px;top:308.7px;width:75.2px">Huong Tran</div>
<div class="c" style="left:385.3px;top:308.7px;width:75.2px">Dallas</div>
<div class="c" style="left:466.5px;top:308.7px;width:75.2px">Dell</div>
<div class="c" style="left:577px;top:308.7px;width:45.9px">8.134</div>
<div class="c" style="left:628.9px;top:308.7px;width:75.2px">wojciech@live.com</div>
<div class="c" style="left:61px;top:326.3px;width:74.7px">Khartoum</div>
<div class="c" style="left:141.7px;top:326.3px;width:75.2px">$503,870</div>
<div class="c dk" style="left:222.9px;top:326.3px;width:75.2px">2.94%</div>
<div class="c" style="left:304.1px;top:326.3px;width:75.2px">Ishaan Gupta</div>
<div class="c" style="left:385.3px;top:326.3px;width:75.2px">Miami</div>
<div class="c" style="left:466.5px;top:326.3px;width:75.2px">Apple</div>
<div class="c" style="left:577px;top:326.3px;width:45.9px">2.219</div>
<div class="c" style="left:628.9px;top:326.3px;width:75.2px">balchen@gmail.com</div>
<div class="c" style="left:61px;top:343.9px;width:74.7px">Kolkata</div>
<div class="c" style="left:141.7px;top:343.9px;width:75.2px">$712,400</div>
<div class="c dk" style="left:222.9px;top:343.9px;width:75.2px">0.93%</div>
<div class="c" style="left:304.1px;top:343.9px;width:75.2px">Jamal Kareem</div>
<div class="c" style="left:385.3px;top:343.9px;width:75.2px">Phoenix</div>
<div class="c" style="left:466.5px;top:343.9px;width:75.2px">Intel</div>
<div class="c" style="left:577px;top:343.9px;width:45.9px">123.48</div>
<div class="c" style="left:628.9px;top:343.9px;width:75.2px">markjugg@gmail.com</div>
<div class="c" style="left:61px;top:361.5px;width:74.7px">Madrid</div>
<div class="c" style="left:141.7px;top:361.5px;width:75.2px">$889,990</div>
<div class="c dk" style="left:222.9px;top:361.5px;width:75.2px">1.24%</div>
<div class="c" style="left:304.1px;top:361.5px;width:75.2px">Laura Ortiz</div>
<div class="c" style="left:385.3px;top:361.5px;width:75.2px">Houston</div>
<div class="c" style="left:466.5px;top:361.5px;width:75.2px">Nike</div>
<div class="c" style="left:577px;top:361.5px;width:45.9px">118.233</div>
<div class="c" style="left:628.9px;top:361.5px;width:75.2px">szymansk@att.net</div>
<div class="c" style="left:61px;top:379.1px;width:74.7px">Osaka</div>
<div class="c" style="left:141.7px;top:379.1px;width:75.2px">$1,134,500</div>
<div class="c dk" style="left:222.9px;top:379.1px;width:75.2px">2.67%</div>
<div class="c" style="left:304.1px;top:379.1px;width:75.2px">Maki Tanaka</div>
<div class="c" style="left:385.3px;top:379.1px;width:75.2px">Chicago</div>
<div class="c" style="left:466.5px;top:379.1px;width:75.2px">Toyota</div>
<div class="c" style="left:577px;top:379.1px;width:45.9px">117.255</div>
<div class="c" style="left:628.9px;top:379.1px;width:75.2px">policies@me.com</div>
<div class="c" style="left:61px;top:396.7px;width:74.7px">Perth</div>
<div class="c" style="left:141.7px;top:396.7px;width:75.2px">$654,230</div>
<div class="c dk" style="left:222.9px;top:396.7px;width:75.2px">1.08%</div>
<div class="c" style="left:304.1px;top:396.7px;width:75.2px">Nina Kowalski</div>
<div class="c" style="left:385.3px;top:396.7px;width:75.2px">Detroit</div>
<div class="c" style="left:466.5px;top:396.7px;width:75.2px">Ford</div>
<div class="c" style="left:577px;top:396.7px;width:45.9px">.237</div>
<div class="c" style="left:628.9px;top:396.7px;width:75.2px">ylchang@mac.com</div>
<div class="c" style="left:61px;top:414.3px;width:74.7px">Phoenix</div>
<div class="c" style="left:141.7px;top:414.3px;width:75.2px">$798,400</div>
<div class="c dk" style="left:222.9px;top:414.3px;width:75.2px">2.29%</div>
<div class="c" style="left:304.1px;top:414.3px;width:75.2px">Omar Haddad</div>
<div class="c" style="left:385.3px;top:414.3px;width:75.2px">Portland</div>
<div class="c" style="left:466.5px;top:414.3px;width:75.2px">Target</div>
<div class="c" style="left:575.4px;top:414.3px;width:47.5px">2.206.94</div>
<div class="c" style="left:628.9px;top:414.3px;width:75.2px">gastown@msn.com</div>
<div class="c" style="left:61px;top:431.9px;width:74.7px">Porto</div>
<div class="c" style="left:141.7px;top:431.9px;width:75.2px">$577,150</div>
<div class="c dk" style="left:222.9px;top:431.9px;width:75.2px">0.64%</div>
<div class="c" style="left:304.1px;top:431.9px;width:75.2px">Paula Silva</div>
<div class="c" style="left:385.3px;top:431.9px;width:75.2px">Orlando</div>
<div class="c" style="left:466.5px;top:431.9px;width:75.2px">Visa</div>
<div class="c" style="left:577px;top:431.9px;width:45.9px">194.143</div>
<div class="c" style="left:628.9px;top:431.9px;width:75.2px">geekgrl@aol.com</div>
<div class="c" style="left:61px;top:449.5px;width:74.7px">Raleigh</div>
<div class="c" style="left:141.7px;top:449.5px;width:75.2px">$934,870</div>
<div class="c dk" style="left:222.9px;top:449.5px;width:75.2px">1.73%</div>
<div class="c" style="left:304.1px;top:449.5px;width:75.2px">Quentin Blake</div>
<div class="c" style="left:385.3px;top:449.5px;width:75.2px">Tampa</div>
<div class="c" style="left:466.5px;top:449.5px;width:75.2px">Gap</div>
<div class="c" style="left:575.4px;top:449.5px;width:47.5px">0.37.18</div>
<div class="c" style="left:628.9px;top:449.5px;width:75.2px">treeves@me.com</div>
<div class="c" style="left:61px;top:467.1px;width:74.7px">Rome</div>
<div class="c" style="left:141.7px;top:467.1px;width:75.2px">$1,018,260</div>
<div class="c dk" style="left:222.9px;top:467.1px;width:75.2px">2.11%</div>
<div class="c" style="left:304.1px;top:467.1px;width:75.2px">Rosa Bianchi</div>
<div class="c" style="left:385.3px;top:467.1px;width:75.2px">Reno</div>
<div class="c" style="left:466.5px;top:467.1px;width:75.2px">Kraft</div>
<div class="c" style="left:575.4px;top:467.1px;width:47.5px">7.86.252</div>
<div class="c" style="left:628.9px;top:467.1px;width:75.2px">dbindel@live.com</div>
<div class="c" style="left:61px;top:484.7px;width:74.7px">Rotterdam</div>
<div class="c" style="left:141.7px;top:484.7px;width:75.2px">$921,243</div>
<div class="c dk" style="left:222.9px;top:484.7px;width:75.2px">2.41%</div>
<div class="c" style="left:304.1px;top:484.7px;width:75.2px">Ohta Kin</div>
<div class="c" style="left:385.3px;top:484.7px;width:75.2px">Garland</div>
<div class="c" style="left:466.5px;top:484.7px;width:75.2px">Fisker Automotive</div>
<div class="c" style="left:547.7px;top:484.7px;width:75.2px">52.176.162.147</div>
<div class="c" style="left:628.9px;top:484.7px;width:75.2px">njpayne@gmail.com</div>
<div class="c" style="left:61px;top:502.3px;width:74.7px">Santa Clara</div>
<div class="c" style="left:141.7px;top:502.3px;width:75.2px">$1,252,219</div>
<div class="c dk" style="left:222.9px;top:502.3px;width:75.2px">1.41%</div>
<div class="c" style="left:304.1px;top:502.3px;width:75.2px">Pan Hyuk</div>
<div class="c" style="left:385.3px;top:502.3px;width:75.2px">Baltimore</div>
<div class="c" style="left:466.5px;top:502.3px;width:75.2px">Faultless Starch/Bon Ami</div>
<div class="c" style="left:547.7px;top:502.3px;width:75.2px">252.96.65.122</div>
<div class="c" style="left:628.9px;top:502.3px;width:75.2px">bbirth@att.net</div>
<div class="c" style="left:61px;top:519.9px;width:74.7px">Singapore</div>
<div class="c" style="left:141.7px;top:519.9px;width:75.2px">$860,155</div>
<div class="c dk" style="left:222.9px;top:519.9px;width:75.2px">0.88%</div>
<div class="c" style="left:304.1px;top:519.9px;width:75.2px">Pok Ae-Ra</div>
<div class="c" style="left:385.3px;top:519.9px;width:75.2px">Kansas City</div>
<div class="c" style="left:466.5px;top:519.9px;width:75.2px">Leucadia National</div>
<div class="c" style="left:547.7px;top:519.9px;width:75.2px">106.211.248.8</div>
<div class="c" style="left:628.9px;top:519.9px;width:75.2px">nicktrig@me.com</div>
<div class="c" style="left:61px;top:537.5px;width:74.7px">Trondheim</div>
<div class="c" style="left:141.7px;top:537.5px;width:75.2px">$1,202,569</div>
<div class="c dk" style="left:222.9px;top:537.5px;width:75.2px">2.37%</div>
<div class="c" style="left:304.1px;top:537.5px;width:75.2px">Salma Fonseca</div>
<div class="c" style="left:385.3px;top:537.5px;width:75.2px">Anaheim</div>
<div class="c" style="left:466.5px;top:537.5px;width:75.2px">Sears</div>
<div class="c" style="left:547.7px;top:537.5px;width:75.2px">238.191.212.150</div>
<div class="c" style="left:628.9px;top:537.5px;width:75.2px">tmccarthy@mac.com</div>
<div class="chart"></div>
<div class="ctitle">Count of lead source</div>
<div style="position:absolute;left:310.6px;top:287px;width:1px;height:157px;background:#cfcfcf"></div>
<div style="position:absolute;left:382.2px;top:287px;width:1px;height:157px;background:#cfcfcf"></div>
<div style="position:absolute;left:453.8px;top:287px;width:1px;height:157px;background:#cfcfcf"></div>
<div style="position:absolute;left:525.4px;top:287px;width:1px;height:157px;background:#cfcfcf"></div>
<div class="bar" style="top:287px;width:234.1px"></div>
<div class="blab" style="top:289.5px;left:135px">Trade Show</div>
<div class="bar" style="top:320px;width:263.9px"></div>
<div class="blab" style="top:322.5px;left:135px">Advertisement</div>
<div class="bar" style="top:352px;width:195.2px"></div>
<div class="blab" style="top:354.5px;left:135px">Website</div>
<div class="bar" style="top:384px;width:110.4px"></div>
<div class="blab" style="top:385.5px;left:135px">Employee Referral</div>
<div class="bar" style="top:416px;width:155.3px"></div>
<div class="blab" style="top:419.5px;left:131.8px">Purchased List</div>
<div style="position:absolute;left:239px;top:287px;width:1px;height:157px;background:#333"></div>
<div class="alab" style="left:209.5px">0</div>
<div class="alab" style="left:281.1px">1,000</div>
<div class="alab" style="left:352.7px">2,000</div>
<div class="alab" style="left:424.3px">3,000</div>
<div class="alab" style="left:495.9px">4,000</div>
<div class="tag">Alyssa</div>
</div></div>
<div class="abs" style="left:0;top:170.1px;width:256px;height:182.7px;background:#f3f3f3;border-top:1px solid #d6d6d6"></div>
<svg class="abs" style="left:11px;top:181.7px;" width="13.4" height="13.4" viewBox="0 0 24 24"><path fill="#555" d="M20 11H7.83l5.59-5.59L12 4l-8 8 8 8 1.41-1.41L7.83 13H20v-2z"/></svg>
<div class="abs" style="left:177.6px;top:182.4px;font-size:9px;font-weight:bold;letter-spacing:-0.45px;line-height:12px;color:#4f87d6">RESOLVE</div>
<svg class="abs" style="left:233.4px;top:184.1px;" width="9.4" height="9.4" viewBox="0 0 9.4 9.4"><path stroke="#4a4a4a" stroke-width="1.2" d="M0.4 0.4L9 9M9 0.4L0.4 9"/></svg>
<svg class="abs" style="left:9px;top:214px;" width="27" height="27" viewBox="0 0 27 27"><defs><clipPath id="cc"><circle cx="13.5" cy="13.5" r="13.3"/></clipPath></defs><g clip-path="url(#cc)"><rect width="27" height="27" fill="#e9e6e2"/><path d="M2 25Q0.5 3.5 14 2.4Q27.5 3.5 25.5 22Q23.5 25 21.5 23Q21.5 9 14 7.2Q6.5 9 6.5 24Q4 26.5 2 25Z" fill="#17100c"/><ellipse cx="14" cy="15.6" rx="7.4" ry="8.6" fill="#d8ab92"/><path d="M6.8 11.4Q9 5.4 14.6 5.6Q19.6 6 21.2 11Q17 7.8 6.8 11.4Z" fill="#17100c"/><path d="M6 27Q14 22.5 22 27Z" fill="#ece2d2"/><path d="M10.4 18.8Q14 21.2 17.6 18.8Q14 22.2 10.4 18.8Z" fill="#f4eee8"/><path d="M9.8 14H12.2M15.8 14H18.2" stroke="#6a4636" stroke-width="0.8"/></g></svg>
<div class="abs" style="left:44.9px;top:217.8px;font-size:10.5px;line-height:13px;color:#333">Christina</div>
<div class="abs" style="left:44.9px;top:230.3px;font-size:7.2px;line-height:9px;color:#777">10:50AM</div>
<div class="abs" style="left:11px;top:258.7px;font-size:19.9px;line-height:23px;color:#262626;white-space:nowrap">Love the chart!</div>
<div class="abs" style="left:0;top:352.3px;width:256px;height:31.2px;background:#fafafa;border-top:1px solid #cfcfcf"></div>
<div class="abs" style="left:9.8px;top:362.5px;font-size:8.8px;line-height:12px;color:#9a9a9a">Reply</div>
<svg class="abs" style="left:230.9px;top:361.9px;" width="14" height="12.4" viewBox="2 3 21 18"><path fill="#9b9b9b" d="M2.01 21L23 12 2.01 3 2 10l15 2-15 2z"/></svg>
<div class="abs" style="left:0;top:383.3px;width:256px;height:16.5px;background:#efefef;border-top:1px solid #d9d9d9;text-align:center;font-size:9px;line-height:17px;color:#555">1 of 1</div>
<div class="abs" style="left:0;top:399.5px;width:256px;height:29.8px;background:#fafafa;border-top:1px solid #d9d9d9"></div>
<div class="abs" style="left:30px;top:400.1px;width:1px;height:29px;background:#dcdcdc"></div>
<div class="abs" style="left:9.7px;top:405.7px;font-family:'Liberation Serif',serif;font-style:italic;font-weight:bold;font-size:14px;line-height:16px;color:#2a2a2a">fx</div>
<div class="abs" style="left:0;top:429.3px;width:256px;height:29px;background:#000"></div>
<svg class="abs" style="left:52px;top:439.2px;" width="9.6" height="10" viewBox="0 0 9.6 10"><path fill="#999" d="M9.6 0V10L0 5Z"/></svg>
<svg class="abs" style="left:121.6px;top:438.2px;" width="12" height="12" viewBox="0 0 12 12"><circle cx="6" cy="6" r="5.6" fill="#777"/><circle cx="6" cy="6" r="4.2" fill="#9c9c9c"/></svg>
<div class="abs" style="left:193.4px;top:439.4px;width:9.7px;height:9.7px;background:#999"></div>
</div>
</body></html>
